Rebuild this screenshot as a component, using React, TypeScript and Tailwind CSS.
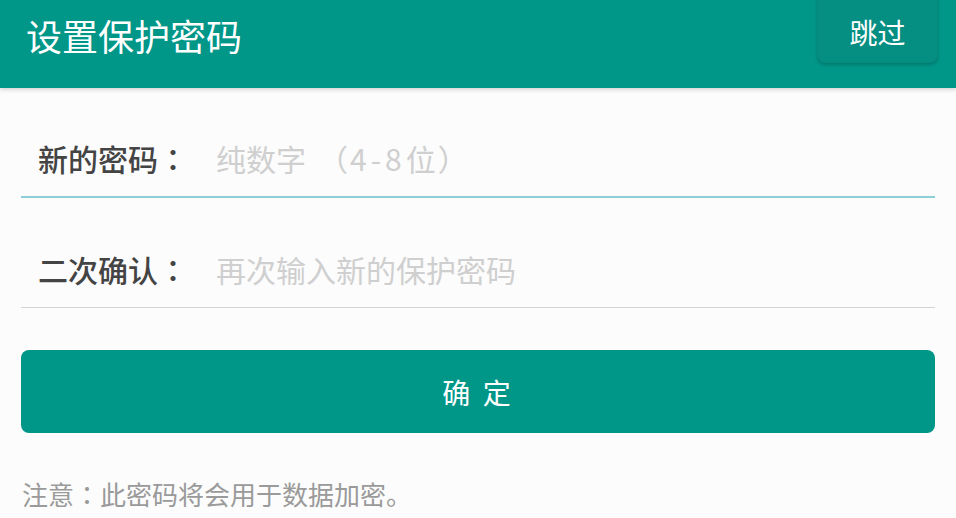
import React from 'react';

const cjk = 'font-["Noto_Sans_CJK_SC","Noto_Sans",sans-serif]';
// centred full-width punctuation, as in the screenshot
const tc = 'font-["Noto_Sans_CJK_TC",sans-serif]';

export default function App() {
  return (
    <div className={`h-[518px] w-[956px] overflow-hidden bg-[#fcfcfc] ${cjk}`}>
      {/* Toolbar */}
      <header className="flex h-[88px] items-start justify-between bg-[#009688] shadow-[0_2px_4px_rgba(0,0,0,0.15)]">
        <h1 className="pl-[26px] pt-[13px] text-[36px] leading-[44px] text-white">设置保护密码</h1>
        <button className="-mt-2 mr-[18px] h-[71px] w-[121px] rounded-lg border border-[#078a7e] bg-[#048f82] pt-2 text-[28px] leading-[36px] text-white shadow-[0_2px_3px_rgba(0,0,0,0.18)]">
          跳过
        </button>
      </header>

      <main className="px-[21px]">
        <div className="flex h-[110px] items-end border-b-2 border-[#8ccfd6] pb-[21px] pl-[17px]">
          <label className="w-[178px] text-[30px] font-medium leading-[34px] text-[#444]">
            新的密码<span className={tc}>：</span>
          </label>
          <span className="text-[30px] leading-[34px] text-[#cfcfcf]">
            纯数字<span className={`${tc} pl-[12px] pr-[2px]`}>（</span>
            <span className="tracking-[4px]">4-8</span>位<span className={`${tc} pl-[2px]`}>）</span>
          </span>
        </div>
        <div className="flex h-[110px] items-end border-b border-[#d4d4d4] pb-[21px] pl-[17px]">
          <label className="w-[178px] text-[30px] font-medium leading-[34px] text-[#444]">
            二次确认<span className={tc}>：</span>
          </label>
          <span className="text-[30px] leading-[34px] text-[#cfcfcf]">再次输入新的保护密码</span>
        </div>

        <button className="mt-[42px] flex h-[83px] w-full items-center justify-center rounded-lg bg-[#009688] text-[28px] tracking-[3px] text-white">
          确 定
        </button>

        <p className="mt-[46px] pl-px text-[26px] leading-[30px] text-[#9a9a9a]">
          注意<span className={tc}>：</span>此密码将会用于数据加密。
        </p>
      </main>
    </div>
  );
}
